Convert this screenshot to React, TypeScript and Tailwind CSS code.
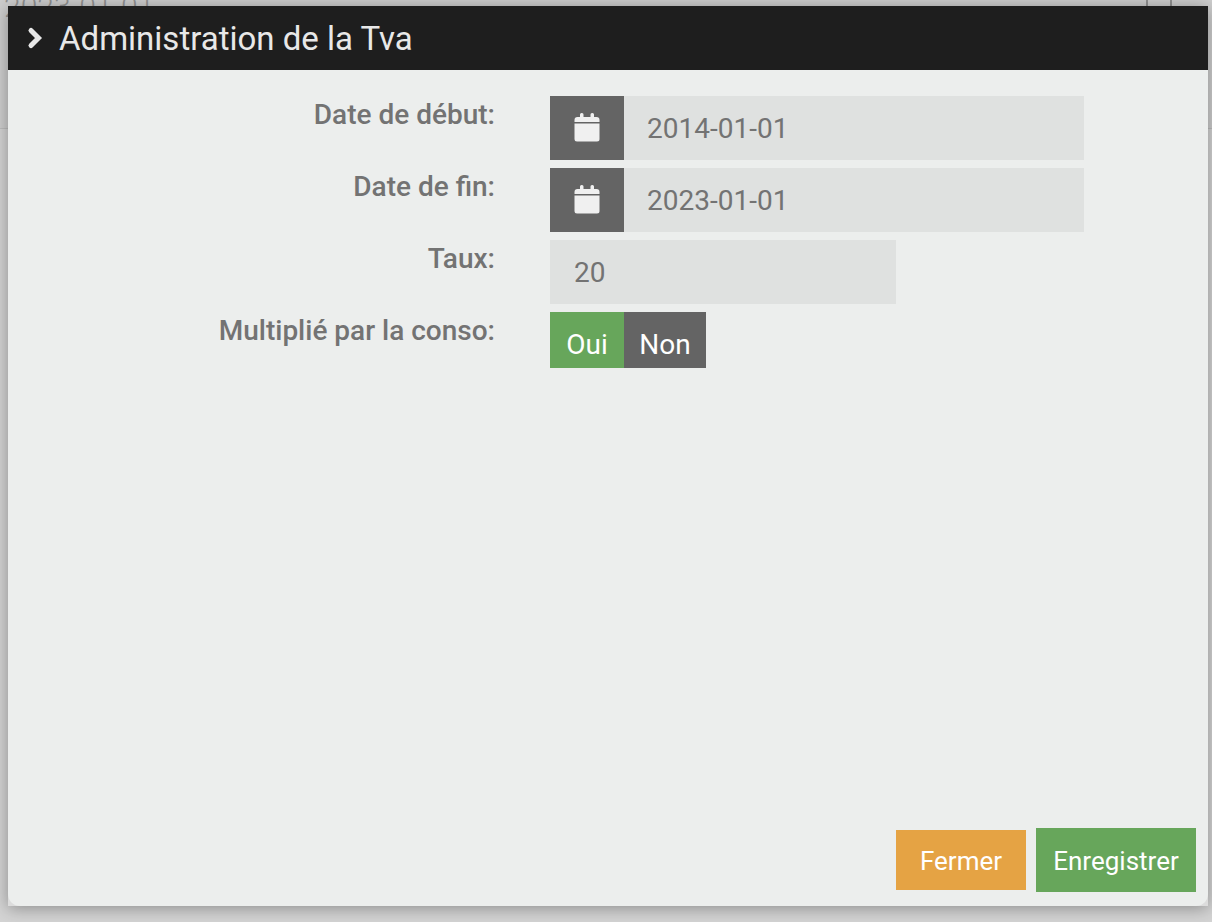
import { useState } from "react";

const ChevronIcon = () => (
  <svg className="h-6 w-4" viewBox="0 0 16 24" fill="none" aria-hidden="true">
    <path
      d="M4 4.5 11.5 12 4 19.5"
      stroke="currentColor"
      strokeWidth="5"
      strokeLinecap="round"
    />
  </svg>
);

const CalendarIcon = () => (
  <svg className="h-8 w-7" viewBox="0 0 28 32" fill="currentColor" aria-hidden="true">
    <path d="M7 5V2.500a1.500 1.500 0 0 1 1.500-1.500h.5a1.500 1.500 0 0 1 1.500 1.500V5h7V2.500A1.500 1.500 0 0 1 19 1h.5A1.500 1.500 0 0 1 21 2.500V5h2.500A3 3 0 0 1 26.500 8v2H1.500V8a3 3 0 0 1 3-3Z" />
    <path d="M1.500 11.500h25V27a2.500 2.500 0 0 1-2.500 2.500h-20A2.500 2.500 0 0 1 1.500 27Z" />
  </svg>
);

function DateField({ id, value, onChange }) {
  return (
    <div className="flex h-16 w-full max-w-[534px]">
      <button
        type="button"
        aria-label="Calendrier"
        className="flex w-[74px] shrink-0 items-center justify-center bg-[#646464] text-[#f0f0f0]"
      >
        <CalendarIcon />
      </button>
      <input
        id={id}
        type="text"
        value={value}
        onChange={(e) => onChange(e.target.value)}
        className="w-full min-w-0 bg-[#dfe1e0] px-[23px] pt-0.5 outline-none"
      />
    </div>
  );
}

function Row({ id, label, children }) {
  return (
    <div className="grid grid-cols-[minmax(0,487fr)_minmax(0,658fr)] gap-[55px]">
      <label htmlFor={id} className="text-right leading-[38px] font-medium">
        {label}
      </label>
      <div>{children}</div>
    </div>
  );
}

export default function App() {
  const [start, setStart] = useState("2014-01-01");
  const [end, setEnd] = useState("2023-01-01");
  const [rate, setRate] = useState("20");
  const [multiplied, setMultiplied] = useState(true);

  return (
    <div className="relative min-h-screen overflow-hidden bg-[#d4d4d4] font-['Roboto',sans-serif] text-[28px] text-[#737373]">
      {/* page behind the dialog */}
      <div className="absolute inset-x-0 top-0 h-[129px] border-b border-[#bebebe] bg-[#cecece] text-[#929292]">
        <div className="-mt-[9px] flex justify-between pr-10 pl-1 text-[30px] leading-8 font-light">
          <span>2023-01-01</span>
          <span className="mt-1 h-3 w-[26px] border-x-2 border-[#929292]" />
        </div>
      </div>

      <div className="relative flex min-h-screen flex-col pt-1.5 pr-1 pb-4 pl-2">
        <div className="flex grow flex-col bg-[#dcdcdc] shadow-[0_2px_16px_rgba(0,0,0,0.35)]">
          <div
            role="dialog"
            aria-labelledby="tva-title"
            className="flex grow flex-col rounded-b-xl bg-[#eceeed]"
          >
            <header className="flex h-16 items-center gap-4 bg-[#1e1e1e] pl-[19px] text-[#e8e8e8]">
              <ChevronIcon />
              <h1 id="tva-title" className="pt-0.5 text-[33px] leading-10">
                Administration de la Tva
              </h1>
            </header>

            <form className="flex grow flex-col" onSubmit={(e) => e.preventDefault()}>
              <div className="flex grow flex-col gap-2 pt-[26px]">
                <Row id="start" label="Date de début:">
                  <DateField id="start" value={start} onChange={setStart} />
                </Row>
                <Row id="end" label="Date de fin:">
                  <DateField id="end" value={end} onChange={setEnd} />
                </Row>
                <Row id="rate" label="Taux:">
                  <input
                    id="rate"
                    type="text"
                    value={rate}
                    onChange={(e) => setRate(e.target.value)}
                    className="block h-16 w-full max-w-[346px] bg-[#dfe1e0] px-6 outline-none"
                  />
                </Row>
                <Row id="multiplied" label="Multiplié par la conso:">
                  <div className="flex h-14 text-white">
                    <button
                      id="multiplied"
                      type="button"
                      aria-pressed={multiplied}
                      onClick={() => setMultiplied(true)}
                      className={`w-[74px] pt-2.5 ${multiplied ? "bg-[#67a65b]" : "bg-[#646464]"}`}
                    >
                      Oui
                    </button>
                    <button
                      type="button"
                      aria-pressed={!multiplied}
                      onClick={() => setMultiplied(false)}
                      className={`w-[82px] pt-2.5 ${multiplied ? "bg-[#646464]" : "bg-[#67a65b]"}`}
                    >
                      Non
                    </button>
                  </div>
                </Row>
              </div>

              <footer className="flex items-center justify-end gap-2.5 pr-3 pb-3.5 text-[26px] text-white">
                <button type="button" className="h-[60px] w-[130px] bg-[#e5a344] pt-0.5">
                  Fermer
                </button>
                <button type="submit" className="h-16 w-40 bg-[#67a65b] pt-0.5">
                  Enregistrer
                </button>
              </footer>
            </form>
          </div>
        </div>
      </div>
    </div>
  );
}
